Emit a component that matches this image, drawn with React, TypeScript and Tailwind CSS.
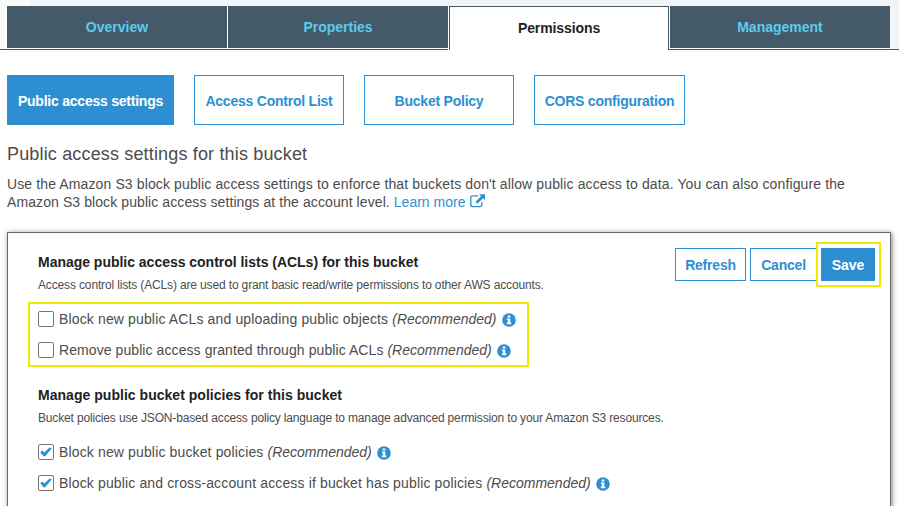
import React from "react";

function InfoIcon() {
  return (
    <svg className="mt-0.5 h-[14px] w-[14px] shrink-0" viewBox="0 0 14 14">
      <circle cx="7" cy="7" r="6.8" fill="#2d8fd2" />
      <path d="M5.7 2.5h2.6v2H5.7zM4.9 5.5h3.4v4h1v1.7H4.8V9.5h1V7.1h-.9z" fill="#fff" />
    </svg>
  );
}

function ExternalIcon() {
  return (
    <svg className="-mt-0.5 h-[14px] w-[15px]" viewBox="0 0 15 14">
      <path d="M8 1.8H2.8Q.8 1.8.8 3.8v6.8q0 2 2 2h7q2 0 2-2V8" fill="none" stroke="#2d8fd2" strokeWidth="1.3" />
      <path d="M9 .3h6v6l-2-2-5.6 5.4-1.9-1.9L11 2.3z" fill="#2d8fd2" />
    </svg>
  );
}

function Option({ label, checked, tracking }: { label: string; checked?: boolean; tracking: string }) {
  return (
    <label className="flex h-[18px] items-center whitespace-nowrap text-[14px] leading-[18px] text-[#4c4c4c]">
      <span className="-mt-px mr-[5px] flex h-4 w-4 shrink-0 items-center justify-center rounded-[2px] border border-[#777] bg-white">
        {checked && (
          <svg className="h-[10px] w-3" viewBox="0 0 12 10">
            <path d="M.3 5.2 2.2 3.6 4.3 5.6 9.6.4 11.8 1.2 5.2 9.2 3.6 9.2z" fill="#2d8fd2" />
          </svg>
        )}
      </span>
      <span className={"mr-[5px] " + tracking}>
        {label} <i className="tracking-normal">(Recommended)</i>
      </span>
      <InfoIcon />
    </label>
  );
}

const tab = "flex h-[42px] items-center justify-center bg-[#455a68] text-[#5bcbf2]";
const sub = "flex h-[50px] items-center justify-center border border-[#2d8fd2] pt-0.5 text-[#2d8fd2]";

export default function App() {
  return (
    <div className="h-[506px] w-[899px] overflow-hidden bg-white font-['Liberation_Sans',Arial,sans-serif] text-[14px] text-[#4c4c4c]">
      <nav className="flex h-[50px] border-b border-[#455a68] bg-[#f1f5f6] bg-linear-to-r from-[#f8fbfa] from-[30px] to-[#f1f5f6] to-[31px] pl-[7px] pt-[6px] font-bold">
        <div className="flex h-[43px] gap-px border-b border-white bg-white">
          <div className={tab + " w-[220px]"}>Overview</div>
          <div className={tab + " w-[220px]"}>Properties</div>
        </div>
        <div className="flex h-[44px] w-[221px] border-l border-white bg-white">
          <div className="flex h-[44px] w-[220px] items-center justify-center border-x border-t border-[#455a68] bg-white tracking-[-0.1px] text-[#222]">
            Permissions
          </div>
        </div>
        <div className="h-[43px] border-b border-l border-white">
          <div className={tab + " w-[220px]"}>Management</div>
        </div>
      </nav>

      <div className="flex gap-5 pl-[7px] pt-[25px] font-bold tracking-[-0.23px]">
        <button className="flex h-[50px] w-[167px] items-center justify-center bg-[#2d8fd2] pt-0.5 text-white">Public access settings</button>
        <button className={sub + " w-[150px]"}>Access Control List</button>
        <button className={sub + " w-[150px]"}>Bucket Policy</button>
        <button className={sub + " w-[151px]"}>CORS configuration</button>
      </div>

      <h1 className="ml-[7px] mt-[18px] h-[22px] whitespace-nowrap text-[18px] leading-[22px] tracking-[0.16px]">Public access settings for this bucket</h1>
      <div className="ml-[7px] mt-[10px] whitespace-nowrap leading-[18px]">
        <p className="tracking-[0.12px]">Use the Amazon S3 block public access settings to enforce that buckets don't allow public access to data. You can also configure the</p>
        <p className="flex items-center">
          <span className="tracking-[0.09px]">Amazon S3 block public access settings at the account level.</span>
          <a className="ml-1 mr-[5px] text-[#2d8fd2]">Learn more</a>
          <ExternalIcon />
        </p>
      </div>

      <section className="ml-[7px] mt-[21px] h-[300px] w-[884px] border border-[#6b6b6b] shadow-[1px_1px_5px_rgba(0,0,0,0.5)]">
        <div className="flex h-[54px] justify-between pl-[30px] pr-[9px] pt-[9px]">
          <div className="whitespace-nowrap pt-[11px]">
            <h2 className="font-bold leading-[18px] tracking-[-0.02px] text-[#222]">Manage public access control lists (ACLs) for this bucket</h2>
            <p className="mt-[6px] text-[12px] leading-4 tracking-[-0.145px]">Access control lists (ACLs) are used to grant basic read/write permissions to other AWS accounts.</p>
          </div>
          <div className="flex font-bold tracking-[-0.2px] text-[#2d8fd2]">
            <button className="mr-1 mt-[6px] h-[33px] w-[71px] border border-[#2d8fd2] pt-0.5">Refresh</button>
            <button className="mt-[6px] h-[33px] w-[66px] border border-r-0 border-[#2d8fd2] pt-0.5">Cancel</button>
            <div className="h-[45px] w-[65px] border-2 border-[#f2e900] bg-white pl-[3px] pt-1">
              <button className="h-[33px] w-[54px] bg-[#2d8fd2] pt-0.5 tracking-normal text-white">Save</button>
            </div>
          </div>
        </div>
        <div className="ml-[20px] mt-[15px] flex h-[65px] w-[501px] flex-col gap-[13px] border-2 border-[#f2e900] pl-2 pt-[6px]">
          <Option label="Block new public ACLs and uploading public objects" tracking="tracking-[0.14px]" />
          <Option label="Remove public access granted through public ACLs" tracking="tracking-[0.08px]" />
        </div>
        <div className="ml-[30px] mt-[19px] whitespace-nowrap">
          <h2 className="font-bold leading-[18px] tracking-[0.03px] text-[#222]">Manage public bucket policies for this bucket</h2>
          <p className="mt-[6px] text-[12px] leading-4 tracking-[-0.155px]">Bucket policies use JSON-based access policy language to manage advanced permission to your Amazon S3 resources.</p>
          <div className="mt-[17px] flex flex-col gap-[13px]">
            <Option checked label="Block new public bucket policies" tracking="tracking-[0.14px]" />
            <Option checked label="Block public and cross-account access if bucket has public policies" tracking="tracking-[0.14px]" />
          </div>
        </div>
      </section>
    </div>
  );
}
